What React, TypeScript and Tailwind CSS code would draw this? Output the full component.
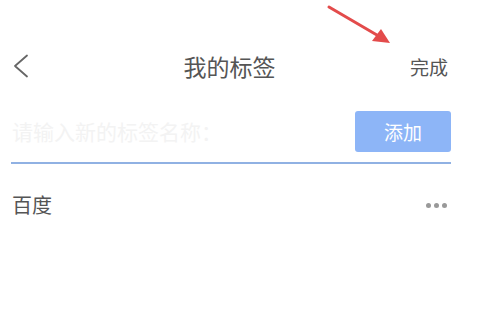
export default function App() {
  return (
    <div
      className="relative w-[478px] h-[324px] bg-white overflow-hidden"
      style={{ fontFamily: '"Noto Sans CJK SC", "Noto Sans", sans-serif' }}
    >
      {/* red annotation arrow */}
      <svg className="absolute left-0 top-0" width="478" height="60" viewBox="0 0 478 60">
        <line x1="329" y1="7" x2="382" y2="38" stroke="#e34b4b" strokeWidth="3" strokeLinecap="round" />
        <polygon points="390,43 372,41 381,29" fill="#e34b4b" />
      </svg>

      <div className="pt-[50px] h-[82px] pl-[13px] pr-[30px] flex items-center justify-between">
        <svg width="16" height="24" viewBox="0 0 16 24" className="text-[#666]">
          <polyline points="14,1.5 2,12 14,22.5" fill="none" stroke="currentColor" strokeWidth="1.8" strokeLinejoin="round" strokeLinecap="round" />
        </svg>
        <span className="text-[23px] leading-none text-[#555] ml-[20px]">我的标签</span>
        <span className="text-[19px] leading-none text-[#555]">完成</span>
      </div>

      <div className="mt-[29px] pl-[11px] pr-[27px]">
        <div className="flex items-center justify-between">
          <span className="text-[21px] leading-none text-[#f3f3f3] pl-[1px]">请输入新的标签名称：</span>
          <button className="w-[96px] h-[41px] rounded-[3px] bg-[#8db5f7] text-white text-[19px] leading-none">
            添加
          </button>
        </div>
        <div className="mt-[10px] h-[2px] bg-[#90b1e3]" />
      </div>

      <div className="mt-[31px] pl-[12px] pr-[31px] flex items-center justify-between">
        <span className="text-[20px] leading-none text-[#555]">百度</span>
        <div className="flex gap-[3px]">
          <span className="w-[5px] h-[5px] rounded-full bg-[#999]" />
          <span className="w-[5px] h-[5px] rounded-full bg-[#999]" />
          <span className="w-[5px] h-[5px] rounded-full bg-[#999]" />
        </div>
      </div>
    </div>
  );
}
